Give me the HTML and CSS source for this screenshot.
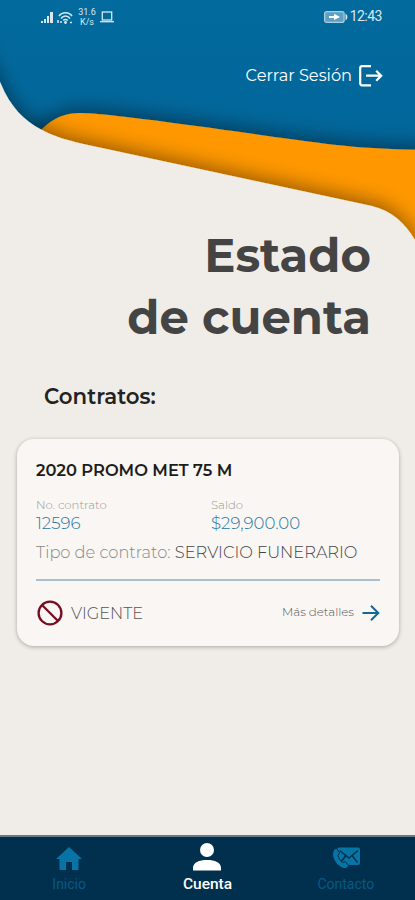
FILE: index.html
```html
<!DOCTYPE html>
<html lang="es">
<head>
    <meta charset="UTF-8">
    <meta name="viewport" content="width=device-width, initial-scale=1.0">
    <title>Estado de cuenta</title>
    <link rel="stylesheet" href="styles.css">
</head>
<body>
    <div class="app">
        <svg class="waves" viewBox="0 0 415 260" aria-hidden="true">
            <defs>
                <linearGradient id="sky" x1="0" y1="0" x2="0" y2="1">
                    <stop offset="0" stop-color="#026a9d"/>
                    <stop offset="1" stop-color="#02649a"/>
                </linearGradient>
                <filter id="shade" x="-20%" y="-30%" width="140%" height="160%">
                    <feDropShadow dx="0" dy="-4" stdDeviation="10" flood-color="#000" flood-opacity="0.42"/>
                </filter>
            </defs>
            <rect width="415" height="260" fill="url(#sky)"/>
            <path filter="url(#shade)" fill="#ff9800" d="M20 150 C42 130 52 113 80 113 C105 113 190 125 290 139 C340 146 375 150 440 150 V300 H20 Z"/>
            <path filter="url(#shade)" fill="#f0ede9" d="M-30 40 C-10 60 -3 74 1 84 C10 106 24 121 42 130 C55 137 70 141 88 145 L372 206 C392 211 405 223 415 240 L440 290 V320 H-30 Z"/>
        </svg>

        <div class="status-bar">
            <div class="status-group">
                <svg class="icon-signal" viewBox="0 0 12 12"><path d="M0 12V10h2v2zM3 12V8h2v4zM6 12V5h2v7zM9 12V1h3v11z" fill="currentColor"/></svg>
                <svg class="icon-wifi" viewBox="0 0 16 13" fill="none" stroke="currentColor" stroke-width="1.500"><path d="M2 5C5 0.500 12 0.500 15 5M4 7.500C6.500 4 10.500 4 13 7.500M6.300 9.500c1.200-1.500 3.200-1.500 4.400 0M1 12V9M4 12V10M13 11.500h2"/><circle cx="8.500" cy="11.500" r="0.700"/></svg>
                <span class="speed">31.6<br>K/s</span>
                <svg class="icon-laptop" viewBox="0 0 14 12" fill="none" stroke="currentColor" stroke-width="1.300"><rect x="2.300" y="1" width="9.400" height="8"/><path d="M0 10.700h14"/></svg>
            </div>
            <div class="status-group">
                <svg class="icon-battery" viewBox="0 0 24 12"><rect x="0.600" y="0.600" width="19.500" height="10.800" rx="2" fill="#5da0c4" stroke="#a9cfe2" stroke-width="1.200"/><path d="M5 5h5V2.800L16 6l-6 3V7H5z" fill="#fff"/><path d="M21.500 2.500C24 4 24 8 21.500 9.500z" fill="#d5e7f0"/></svg>
                <span class="clock">12:43</span>
            </div>
        </div>

        <div class="logout">
            <span>Cerrar Sesión</span>
            <svg class="icon-logout" viewBox="0 0 24 22" fill="none" stroke="currentColor" stroke-width="2.200"><path d="M12 1.200H3.200Q1.200 1.200 1.200 3.200V18.300Q1.200 20.300 3.200 20.300H12M7 10.700H22M17.200 5.700L22.200 10.700L17.200 15.700"/></svg>
        </div>

        <h1 class="title">Estado<br>de cuenta</h1>

        <h2 class="subtitle">Contratos:</h2>

        <div class="card">
            <h3 class="card-title">2020 PROMO MET 75 M</h3>
            <div class="card-data">
                <div>
                    <div class="label">No. contrato</div>
                    <div class="value">12596</div>
                </div>
                <div>
                    <div class="label">Saldo</div>
                    <div class="value">$29,900.00</div>
                </div>
            </div>
            <div class="card-type"><span class="type-label">Tipo de contrato:</span> <span class="type-name">SERVICIO FUNERARIO</span></div>
            <div class="card-footer">
                <div class="state">
                    <svg class="icon-ban" viewBox="0 0 26 26" fill="none" stroke="#760c20" stroke-width="2.300"><circle cx="13" cy="13" r="11.400"/><path d="M5 5L21 21"/></svg>
                    <span>VIGENTE</span>
                </div>
                <div class="details">
                    <span>Más detalles</span>
                    <svg class="icon-arrow" viewBox="0 0 18 16" fill="none" stroke="#186696" stroke-width="2"><path d="M0.500 8H16M9 0.800L16.300 8L9 15.200"/></svg>
                </div>
            </div>
        </div>

        <div class="tabs">
            <div class="tab">
                <svg class="icon-tab" viewBox="0 0 28 28"><path d="M14 2L27 14h-3.500v11H17v-8h-6v8H4.500V14H1z" fill="#0873a5"/></svg>
                <span>Inicio</span>
            </div>
            <div class="tab tab-active">
                <svg class="icon-tab" viewBox="0 0 28 28" fill="#fff"><circle cx="14" cy="7" r="7"/><path d="M0 27.500V25C0 19.500 6 17 14 17s14 2.500 14 8v2.500z"/></svg>
                <span>Cuenta</span>
            </div>
            <div class="tab">
                <svg class="icon-tab" viewBox="0 0 28 28"><rect x="5" y="2.500" width="23" height="17.500" rx="2" fill="#0873a5"/><path d="M7.500 5.500l9.500 7.500L26 5.500M8.500 17.500l5.500-7M25.500 17.500L20 10.500" fill="none" stroke="#00304d" stroke-width="1.500"/><path d="M2.500 4C-1 8 0.500 14 4.500 18.500C8 22.500 11.500 24 14 23.500L17 21L13 16.500L10.500 17.500C8 15.500 6.500 13 6 10.500L7.500 8L4.500 3z" fill="#0873a5" stroke="#00304d" stroke-width="1"/></svg>
                <span>Contacto</span>
            </div>
        </div>
    </div>
</body>
</html>
```
FILE: styles.css
```css
* { box-sizing: border-box; }
body { margin: 0; background: #f0ede9; font-family: Montserrat, Inter, "Open Sans", sans-serif; color: #444; }
h1, h2, h3 { margin: 0; }
svg { display: block; flex: none; }
.app { position: relative; display: flex; flex-direction: column; width: 415px; height: 900px; overflow: hidden; }
.waves { position: absolute; top: 0; left: 0; width: 415px; height: 260px; z-index: -1; }

.status-bar { display: flex; justify-content: space-between; height: 34px; padding: 0 33px 0 41px; color: #d8e8f1; font-family: Roboto, sans-serif; }
.status-group { display: flex; align-items: center; }
.icon-signal { width: 12px; height: 12px; }
.icon-wifi { width: 16px; height: 13px; margin-left: 4px; }
.speed { width: 18px; margin: 0 4px 0 5px; font-size: 9px; line-height: 10px; text-align: center; }
.icon-laptop { width: 14px; height: 12px; }
.icon-battery { width: 24px; height: 12px; margin-right: 2px; }
.clock { margin-top: -2px; font-size: 14px; line-height: 16px; letter-spacing: -0.500px; }

.logout { display: flex; justify-content: flex-end; align-items: center; gap: 7px; height: 84px; padding-right: 32px; color: #fff; font-size: 16.200px; }
.logout span { margin-top: -2px; }
.icon-logout { width: 24px; height: 22px; }

.title { margin-top: 107px; padding-right: 44px; font-size: 46.500px; line-height: 62px; font-weight: 700; text-align: right; }
.subtitle { margin: 34px 0 0 44px; font-size: 21.300px; line-height: 26px; font-weight: 600; color: #222; }

.card { height: 207px; margin: 30px 16px 0 17px; padding: 20px 19px 0 19px; background: #f9f6f3; border-radius: 17px; box-shadow: 0 1px 4px rgba(0, 0, 0, 0.300); }
.card-title { font-size: 16.300px; line-height: 22px; font-weight: 600; color: #1c1c1c; }
.card-data { display: grid; grid-template-columns: 175px 1fr; margin-top: 17px; }
.label { font-size: 11.700px; line-height: 14px; font-weight: 300; color: #999; }
.value { font-size: 16.600px; line-height: 23px; font-weight: 300; color: #2678a6; }
.card-type { margin-top: 7px; padding-bottom: 17px; border-bottom: 2px solid #a9bfce; font-size: 16.250px; line-height: 20px; font-weight: 300; white-space: nowrap; }
.type-label { color: #888; }
.type-name { color: #444; }
.card-footer { display: flex; justify-content: space-between; align-items: center; height: 64px; }
.state, .details { display: flex; align-items: center; gap: 8px; font-weight: 300; }
.state { font-size: 16.200px; color: #555; }
.details { font-size: 11.800px; color: #555; }
.details span { margin-top: -2px; }
.icon-ban { width: 26px; height: 26px; margin-left: 1px; }
.icon-arrow { width: 18px; height: 16px; }

.tabs { display: grid; grid-template-columns: repeat(3, 1fr); height: 65px; margin-top: auto; background: #00304d; border-top: 2px solid #64798a; }
.tab { display: flex; flex-direction: column; align-items: center; padding-top: 8px; color: #075985; font-family: Roboto, sans-serif; font-size: 14px; line-height: 18px; }
.icon-tab { width: 28px; height: 28px; margin-bottom: 2px; }
.tab-active { padding-top: 6px; color: #fff; font-size: 15.500px; font-weight: 500; }
.tab-active .icon-tab { margin-bottom: 4px; }
```
